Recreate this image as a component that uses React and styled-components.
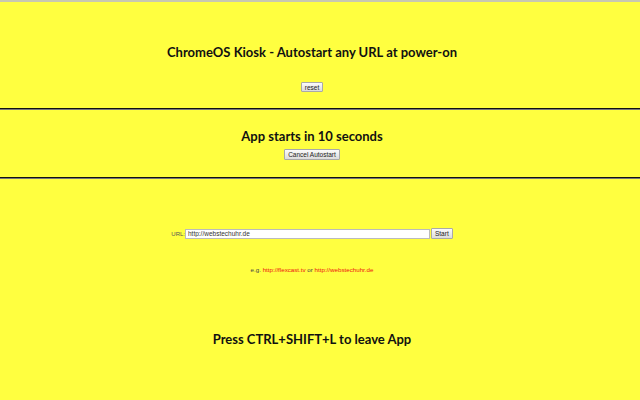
import React from 'react';
import styled, { createGlobalStyle } from 'styled-components';

const GlobalStyle = createGlobalStyle`
  html, body {
    margin: 0;
    padding: 0;
    background: #ffff40;
  }
  body {
    font-family: 'Liberation Sans', Arial, sans-serif;
  }
`;

const Page = styled.div`
  width: 640px;
  height: 400px;
  box-sizing: border-box;
  border-top: 2px solid #c8c8b0;
  background: #ffff40;
  display: flex;
  flex-direction: column;
  overflow: hidden;
`;

const Section = styled.section`
  height: ${props => props.h}px;
  display: flex;
  flex-direction: column;
  align-items: center;
  padding-top: ${props => props.pt}px;
  padding-right: 16px;
  box-sizing: border-box;
`;

const Rule = styled.div`
  height: 2px;
  border-top: 1.5px solid #111;
  border-bottom: 0.5px solid #777;
  box-sizing: border-box;
`;

const Heading = styled.h1`
  margin: 0;
  font-family: Lato, 'Open Sans', sans-serif;
  font-weight: 700;
  font-size: 13px;
  line-height: 18px;
  color: #111;
  margin-top: ${props => props.mt || 0}px;
  margin-bottom: ${props => props.mb || 0}px;
`;

const Button = styled.button`
  font-family: 'Liberation Sans', Arial, sans-serif;
  font-size: 6.5px;
  line-height: 7px;
  color: #222;
  padding: 1px 3px;
  height: ${props => props.h || 11}px;
  border: 1px solid #a9a9a9;
  border-radius: 1px;
  background: linear-gradient(#fbfbfb, #dcdcdc);
  cursor: pointer;
`;

const UrlRow = styled.div`
  display: flex;
  align-items: center;
  font-size: 6px;
  color: #555;
`;

const UrlInput = styled.input`
  width: 245px;
  height: 10px;
  box-sizing: border-box;
  border: 1px solid #bbb;
  background: #fff;
  font-family: 'Liberation Sans', Arial, sans-serif;
  font-size: 6.5px;
  color: #333;
  padding: 0 2px;
  margin-right: 1px;
  outline: none;
`;

const Example = styled.p`
  margin: 0;
  margin-top: ${props => props.mt || 0}px;
  font-size: 6.2px;
  color: #444;
`;

const Link = styled.a`
  color: #ee1111;
  text-decoration: none;
`;

export default function App() {
  return (
    <>
      <GlobalStyle />
      <Page>
        <Section h={106} pt={41}>
          <Heading mb={21}>ChromeOS Kiosk - Autostart any URL at power-on</Heading>
          <Button h={10}>reset</Button>
        </Section>
        <Rule />
        <Section h={68} pt={17}>
          <Heading mb={4}>App starts in 10 seconds</Heading>
          <Button h={11}>Cancel Autostart</Button>
        </Section>
        <Rule />
        <Section h={222} pt={49}>
          <UrlRow>
            URL:
            <UrlInput defaultValue="http://webstechuhr.de" />
            <Button h={11}>Start</Button>
          </UrlRow>
          <Example mt={27}>
            e.g. <Link href="#">http://flexcast.tv</Link> or <Link href="#">http://webstechuhr.de</Link>
          </Example>
          <Heading mt={57}>Press CTRL+SHIFT+L to leave App</Heading>
        </Section>
      </Page>
    </>
  );
}
